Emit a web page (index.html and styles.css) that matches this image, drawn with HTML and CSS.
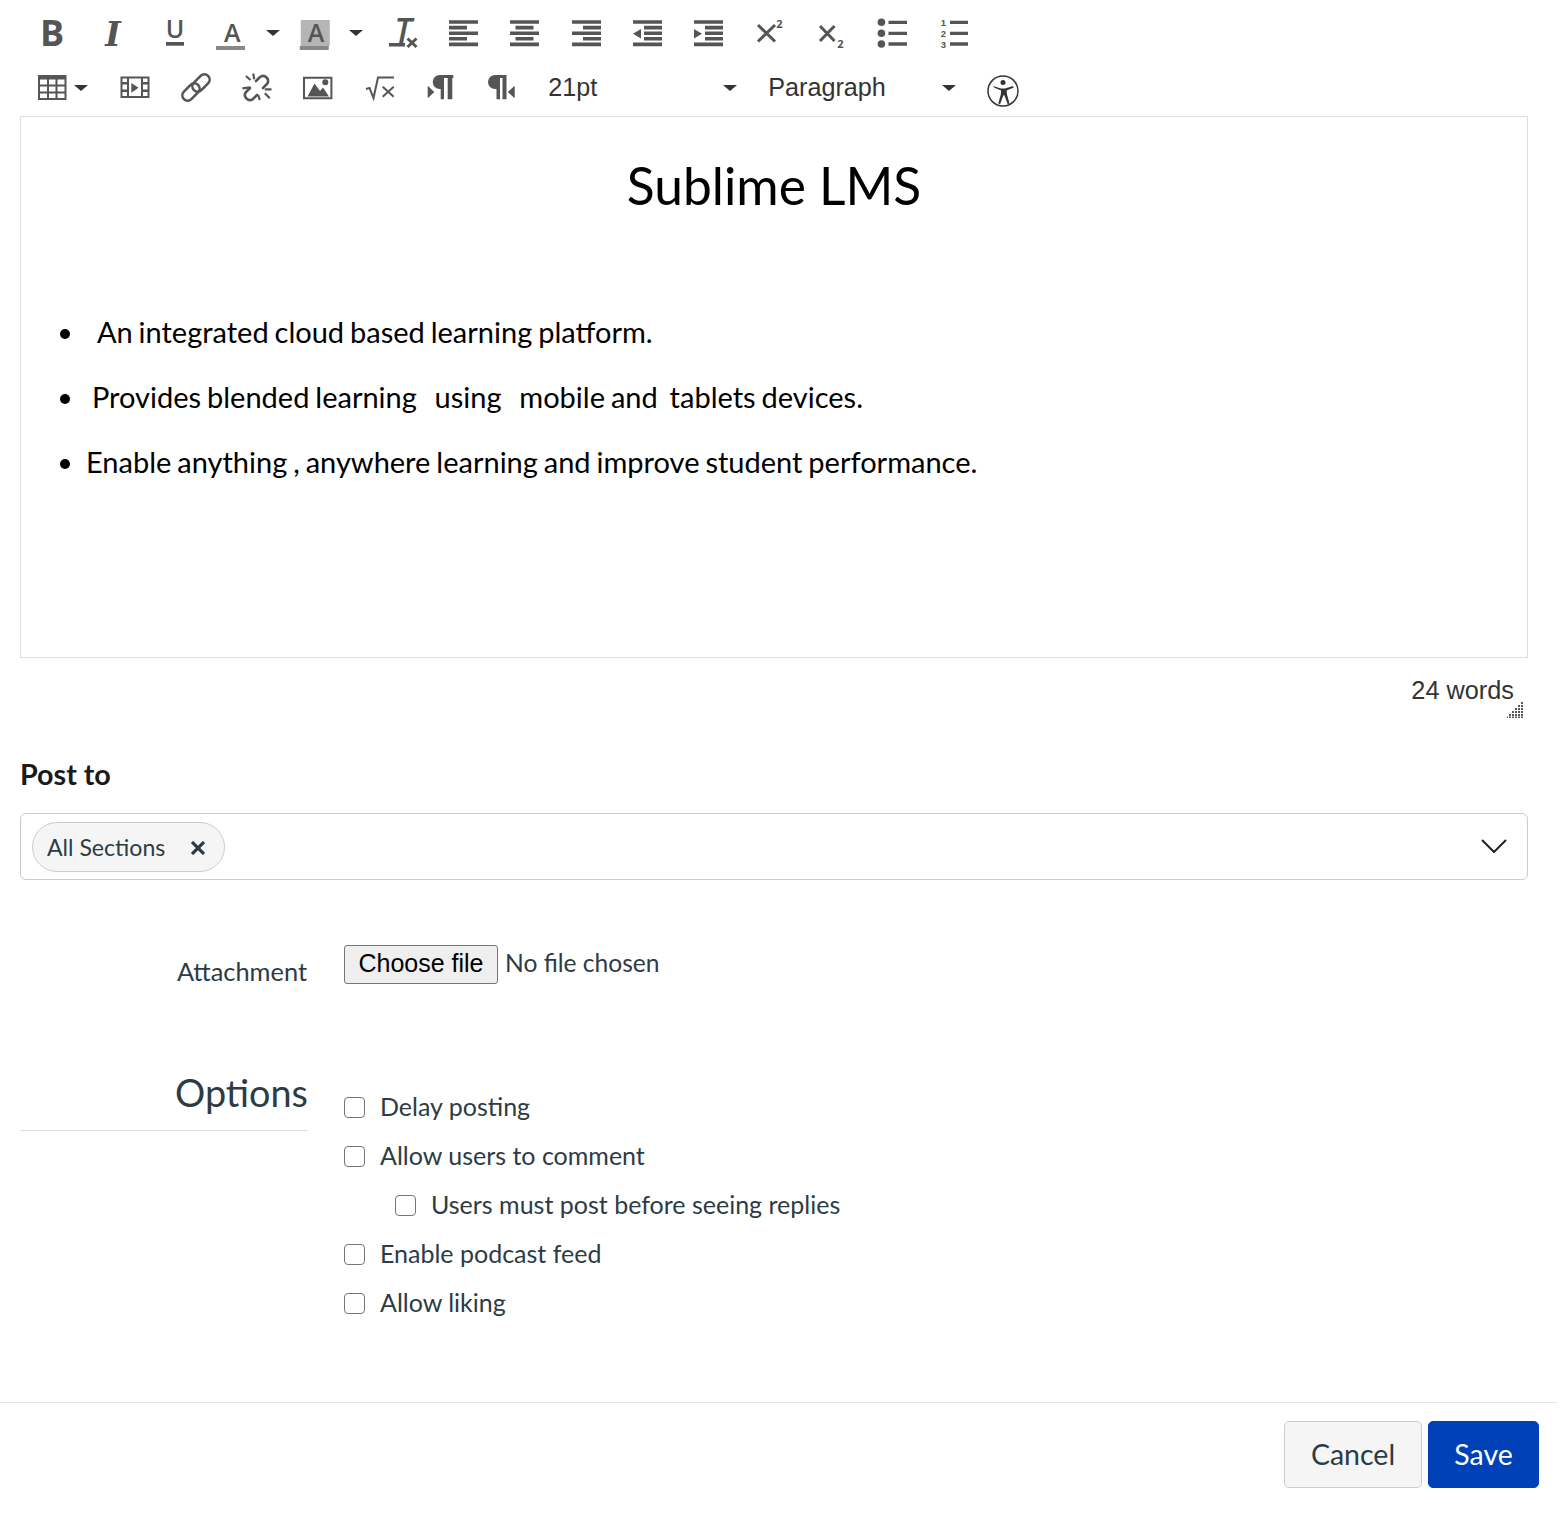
FILE: index.html
```html
<!DOCTYPE html>
<html lang="en">
<head>
<meta charset="utf-8">
<title>Edit announcement</title>
<link rel="stylesheet" href="styles.css">
</head>
<body>
<div class="page">
<div class="toolbar">
  <div class="tb-row">
    <span class="btn"><svg class="ico" viewBox="0 0 30 30"><text class="g g-b" x="15" y="27.500" text-anchor="middle">B</text></svg></span>
    <span class="btn"><svg class="ico" viewBox="0 0 30 30"><text class="g g-i" x="15" y="27.500" text-anchor="middle">I</text></svg></span>
    <span class="btn"><svg class="ico" viewBox="0 0 30 30"><text class="g g-u" x="15" y="20" text-anchor="middle">U</text><rect x="6" y="24" width="18" height="3.700"/></svg></span>
    <span class="split"><svg class="ico" viewBox="0 0 30 30"><text class="g g-a" x="15.250" y="23.500" text-anchor="middle">A</text><rect class="bar" x="-1" y="28" width="29" height="4"/></svg><i class="caret"></i></span>
    <span class="split"><svg class="ico" viewBox="0 0 30 30"><rect class="hl" x="0.750" y="2" width="29" height="26"/><text class="g g-a" x="16" y="23.500" text-anchor="middle">A</text><rect class="bar" x="-0.250" y="28" width="29" height="4"/></svg><i class="caret"></i></span>
    <span class="btn first-after"><svg class="ico" viewBox="0 0 30 30"><text class="g g-t" x="15" y="25" text-anchor="middle">T</text><rect x="1" y="25" width="16" height="3.500"/><path class="ln" d="M19.500 20.500l9 8.500M28.500 20.500l-9 8.500"/></svg></span>
    <span class="btn"><svg class="ico" viewBox="0 0 30 30"><path d="M0 2.200h29v3.600H0zM0 7.800h18v3.600H0zM0 13.400h29v3.600H0zM0 19h18v3.600H0zM0 24.600h29v3.600H0z"/></svg></span>
    <span class="btn"><svg class="ico" viewBox="0 0 30 30"><path d="M0 2.200h29v3.600H0zM5.500 7.800h18v3.600h-18zM0 13.400h29v3.600H0zM5.500 19h18v3.600h-18zM0 24.600h29v3.600H0z"/></svg></span>
    <span class="btn"><svg class="ico" viewBox="0 0 30 30"><path d="M0 2.200h29v3.600H0zM11 7.800h18v3.600H11zM0 13.400h29v3.600H0zM11 19h18v3.600H11zM0 24.600h29v3.600H0z"/></svg></span>
    <span class="btn"><svg class="ico" viewBox="0 0 30 30"><path d="M0 2.200h29v3.600H0zM11 7.800h18v3.600H11zM11 13.400h18v3.600H11zM11 19h18v3.600H11zM0 24.600h29v3.600H0zM8 11v9.500L0 15.750z"/></svg></span>
    <span class="btn"><svg class="ico" viewBox="0 0 30 30"><path d="M0 2.200h29v3.600H0zM11 7.800h18v3.600H11zM11 13.400h18v3.600H11zM11 19h18v3.600H11zM0 24.600h29v3.600H0zM0 11v9.500l8-4.750z"/></svg></span>
    <span class="btn"><svg class="ico" viewBox="0 0 30 30"><path class="ln" d="M3 7l17 16.500M20 7L3 23.500"/><text class="g g-n" x="24.500" y="10" text-anchor="middle">2</text></svg></span>
    <span class="btn"><svg class="ico" viewBox="0 0 30 30"><path class="ln" d="M3 8l14.500 15M17.500 8L3 23"/><text class="g g-n" x="23.500" y="29.500" text-anchor="middle">2</text></svg></span>
    <span class="btn"><svg class="ico" viewBox="0 0 30 30"><circle cx="3.400" cy="4.300" r="3.800"/><circle cx="3.400" cy="15.300" r="3.800"/><circle cx="3.400" cy="26" r="3.800"/><path d="M10.500 2.700H29v3.400H10.500zM10.500 13.700H29v3.400H10.500zM10.500 24.300H29v3.400H10.500z"/></svg></span>
    <span class="btn"><svg class="ico" viewBox="0 0 30 30"><text class="g g-o" text-anchor="middle"><tspan x="4.500" y="7.700">1</tspan><tspan x="4.500" y="18.700">2</tspan><tspan x="4.500" y="29.700">3</tspan></text><path d="M11 2.700h18v3.400H11zM11 13.700h18v3.400H11zM11 24.300h18v3.400H11z"/></svg></span>
  </div>
  <div class="tb-row">
    <span class="split split-table"><svg class="ico" viewBox="0 0 30 30"><path fill-rule="evenodd" d="M0 2h28.500v25H0zM2 6.500v5h7v-5zM11 6.500v5h6.500v-5zM19.500 6.500v5H26.500v-5zM2 13.500v5h7v-5zM11 13.500v5h6.500v-5zM19.500 13.500v5H26.500v-5zM2 20.500V25h7v-4.500zM11 20.500V25h6.500v-4.500zM19.500 20.500V25H26.500v-4.500z"/></svg><i class="caret"></i></span>
    <span class="btn"><svg class="ico" viewBox="0 0 30 30"><path fill-rule="evenodd" d="M0.500 3.500h29V25H0.500zM2.500 5.500v3.500h4.500V5.500zM2.500 11.500v5h4.500v-5zM2.500 19v4h4.500v-4zM23 5.500v3.500h4.500V5.500zM23 11.500v5h4.500v-5zM23 19v4h4.500v-4zM9 5.500V23h12V5.500z"/><path d="M11.300 10v9.700l7.300-4.850z"/></svg></span>
    <span class="btn"><svg class="ico" viewBox="0 0 30 30"><g class="ln link"><rect x="14.750" y="0" width="10.500" height="20" rx="5.250" transform="rotate(45 20 10)"/><rect x="4.750" y="9" width="10.500" height="20" rx="5.250" transform="rotate(45 10 19)"/></g></svg></span>
    <span class="btn"><svg class="ico" viewBox="0 0 30 30"><g class="ln link"><path d="M14 8l4-4a5 5 0 0 1 7 7l-4 4"/><path d="M8 15l-4 4a5 5 0 0 0 7 7l4-4"/></g><path class="ln ray" d="M4 3l4.500 4M11.200 0.500l1 5.800M0.500 15.300l7.500-1M22.800 20.300l5 5M16.200 22l1.600 5M22.800 16.300h6.700"/></svg></span>
    <span class="btn"><svg class="ico" viewBox="0 0 30 30"><path fill-rule="evenodd" d="M0 3.700h29.400v22.600H0zM2 5.700v18.600h25.400V5.700z"/><circle cx="22.300" cy="9.300" r="3"/><path d="M4.500 23.500l7-13 5.500 7.500 3-3.500 6 9z"/></svg></span>
    <span class="btn"><svg class="ico" viewBox="0 0 30 30"><path class="ln thin" d="M1 16l3.500-1 4 10L13 4.500h16"/><path class="ln thin" d="M17.700 13.700l11 10M28.700 13.700l-11 10"/></svg></span>
    <span class="btn"><svg class="ico" viewBox="0 0 30 30"><path d="M27.300 2v3h-1v21.300h-4.600V5H18v21.300h-3.300V16h-1a7 7 0 0 1 0-14zM1.700 12.700l6.600 6.300-6.600 6.300z"/></svg></span>
    <span class="btn"><svg class="ico" viewBox="0 0 30 30"><path d="M19.500 2v24.300h-4V5H13v21.300H9.500V16H8a7 7 0 0 1 0-14zM27.700 12.700L20.700 19l7 6.300z"/></svg></span>
    <span class="sel sel-size">21pt<i class="caret"></i></span>
    <span class="sel sel-format">Paragraph<i class="caret"></i></span>
    <svg class="a11y" viewBox="0 0 32 32"><circle class="ln thin-c" cx="16" cy="16" r="15"/><circle cx="16" cy="7.500" r="2.500"/><path d="M6 11l8 2.500h4l8-2.500.7 1.500-7 3 .3 4 2.500 9-1.800.7-3.300-9h-1l-3.300 9-1.800-.7 2.500-9 .3-4-7-3z"/></svg>
  </div>
</div>

<main class="content">
  <section class="editor">
    <h1 class="doc-title">Sublime LMS</h1>
    <ul class="doc-list">
      <li>&nbsp;&nbsp;An integrated cloud based learning platform.</li>
      <li>&nbsp;Provides blended learning&nbsp;&nbsp; using&nbsp;&nbsp; mobile and&nbsp; tablets devices.</li>
      <li>Enable anything , anywhere learning and improve student performance.</li>
    </ul>
  </section>
  <div class="status">
    <span class="words">24 words</span>
    <svg class="grip" viewBox="0 0 16 16"><path d="M14 0h2v2h-2zM14 3h2v2h-2zM11 3h2v2h-2zM14 6h2v2h-2zM11 6h2v2h-2zM8 6h2v2H8zM14 9h2v2h-2zM11 9h2v2h-2zM8 9h2v2H8zM5 9h2v2H5zM14 12h2v2h-2zM11 12h2v2h-2zM8 12h2v2H8zM5 12h2v2H5zM2 12h2v2H2zM14 14.500h2V16h-2zM11 14.500h2V16h-2zM8 14.500h2V16H8zM5 14.500h2V16H5zM2 14.500h2V16H2zM0 14.500h1V16H0z"/></svg>
  </div>

  <h2 class="post-to">Post to</h2>
  <div class="multi">
    <span class="tag">All Sections<svg class="tag-x" viewBox="0 0 14 14"><path d="M1 1l12 12M13 1L1 13"/></svg></span>
    <svg class="chev" viewBox="0 0 26 14"><path d="M1 1l12 12L25 1"/></svg>
  </div>

  <div class="form-row attach-row">
    <label class="row-label">Attachment</label>
    <div class="file">
      <button class="file-btn" type="button">Choose file</button>
      <span class="file-note">No file chosen</span>
    </div>
  </div>

  <div class="form-row options-row">
    <div class="options-head">Options</div>
    <div class="checks">
      <label class="check"><input type="checkbox">Delay posting</label>
      <label class="check"><input type="checkbox">Allow users to comment</label>
      <label class="check check-sub"><input type="checkbox">Users must post before seeing replies</label>
      <label class="check"><input type="checkbox">Enable podcast feed</label>
      <label class="check"><input type="checkbox">Allow liking</label>
    </div>
  </div>
</main>

<footer class="footer">
  <button class="b b-cancel" type="button">Cancel</button>
  <button class="b b-save" type="button">Save</button>
</footer>
</div>
</body>
</html>
```
FILE: styles.css
```css
* { box-sizing: border-box; }
html, body { margin: 0; padding: 0; background: #fff; }
body { font-family: Lato, "Liberation Sans", sans-serif; color: #2d3b45; font-size: 25px; }
.page { width: 1557px; height: 1526px; }

.toolbar { padding: 5px 0 0 21.500px; height: 116px; }
.tb-row { display: flex; align-items: center; height: 55px; }
.btn { width: 61.250px; flex: none; display: flex; justify-content: center; }
.ico { width: 30px; height: 30px; fill: #555; display: block; overflow: visible; }
.split { width: 83px; flex: none; display: flex; align-items: center; padding-left: 12px; }
.split .caret { margin-left: 19px; }
.split-table { width: 82.500px; padding-left: 16.500px; }
.split-table .caret { margin-left: 6px; }
.caret { display: block; width: 0; height: 0; border-left: 7px solid transparent; border-right: 7px solid transparent; border-top: 6.500px solid #333; flex: none; }
.first-after { margin-left: 1px; }
.g { fill: #555; }
.g-b { font: 700 36px "Open Sans", sans-serif; }
.g-i { font: italic 700 33px "DejaVu Serif", serif; }
.g-u { font: 600 25px "Open Sans", sans-serif; }
.g-a { font: 600 25px "Open Sans", sans-serif; }
.g-t { font: italic 600 34px "Open Sans", sans-serif; }
.g-n { font: 700 11px "Open Sans", sans-serif; }
.g-o { font: 700 9.500px "Liberation Sans", sans-serif; }
.bar { fill: #888; }
.hl { fill: #b5b5b5; }
.ln { fill: none; stroke: #555; stroke-width: 3; }
.thin { stroke-width: 2; }
.thin-c { stroke-width: 1.500; }
.link { stroke-width: 2.600; stroke-linecap: round; }
.ray { stroke-width: 2.200; }
.sel { display: flex; align-items: center; justify-content: space-between; flex: none; font-family: "Liberation Sans", Arial, sans-serif; font-size: 25.200px; color: #333; padding-left: 15.500px; }
.sel-size { width: 220px; padding-right: 16px; }
.sel-format { width: 220px; padding-right: 17px; }
.a11y { width: 32px; height: 32px; margin: 6px 0 0 14px; fill: #333; overflow: visible; flex: none; }
.a11y .ln { stroke: #333; }

.content { width: 1508px; margin-left: 20px; }
.editor { height: 542px; border: 1px solid #ddd; color: #000; padding-top: 34px; }
.doc-title { margin: 0; text-align: center; font-size: 51.500px; line-height: 68px; font-weight: 400; }
.doc-list { list-style: disc; margin: 80px 0 0; padding: 0 0 0 65px; font-size: 29px; word-spacing: -1.500px; line-height: 65px; }

.status { display: flex; justify-content: flex-end; height: 60px; position: relative; }
.words { font-family: "Liberation Sans", Arial, sans-serif; font-size: 25.300px; color: #333; padding: 17px 14px 0 0; line-height: 30px; }
.grip { position: absolute; right: 5px; top: 44px; width: 16px; height: 16px; fill: #555; }

.post-to { margin: 38px 0 0; font-size: 28.700px; line-height: 36px; font-weight: 700; color: #1a1a1a; }
.multi { margin-top: 21px; height: 67px; border: 1px solid #c7cdd1; border-radius: 6px; display: flex; align-items: center; justify-content: space-between; padding: 0 20px 0 11px; }
.tag { display: flex; align-items: center; height: 50px; padding: 0 19px 0 14px; background: #f5f5f5; border: 1px solid #c7cdd1; border-radius: 25px; font-size: 23.100px; color: #2d3b45; }
.tag-x { width: 14px; height: 14px; margin: 2px 0 0 26px; fill: none; stroke: #2d3b45; stroke-width: 3.200; }
.chev { width: 26px; height: 14px; margin-bottom: 2px; fill: none; stroke: #222; stroke-width: 2; }

.form-row { display: grid; grid-template-columns: 288px 1fr; column-gap: 36px; }
.attach-row { margin-top: 65px; height: 40px; }
.row-label { text-align: right; padding: 10px 1px 0 0; line-height: 32px; font-size: 25.400px; }
.file { display: flex; align-items: center; gap: 7px; height: 39px; }
.file-btn { font: 25px "Liberation Sans", Arial, sans-serif; color: #000; background: #efefef; border: 1px solid #767676; border-radius: 3px; height: 39px; width: 154px; padding: 0 0 2px; }
.file-note { font-size: 24.600px; padding-bottom: 4px; }

.options-row { margin-top: 85px; }
.options-head { height: 61px; border-bottom: 1px solid #ddd; text-align: right; font-size: 37.800px; line-height: 46px; }
.checks { padding-top: 11px; }
.check { display: flex; align-items: center; height: 49px; line-height: 32px; }
.check input { appearance: none; width: 21px; height: 21px; margin: 3px 15px 0 0; flex: none; background: #fff; border: 1.800px solid #767676; border-radius: 4px; }
.check-sub { padding-left: 51px; }

.footer { margin-top: 76px; border-top: 1px solid #e5e5e5; display: flex; justify-content: flex-end; gap: 6px; padding: 18px 18px 0 0; }
.b { height: 67px; font: 28.500px Lato, sans-serif; border-radius: 5px; padding: 0 0 2px; cursor: pointer; }
.b-cancel { width: 138px; background: #f5f5f5; border: 1px solid #c7cdd1; color: #2d3b45; }
.b-save { width: 111px; background: #0041b8; border: 1px solid #0041b8; color: #fff; }
```
